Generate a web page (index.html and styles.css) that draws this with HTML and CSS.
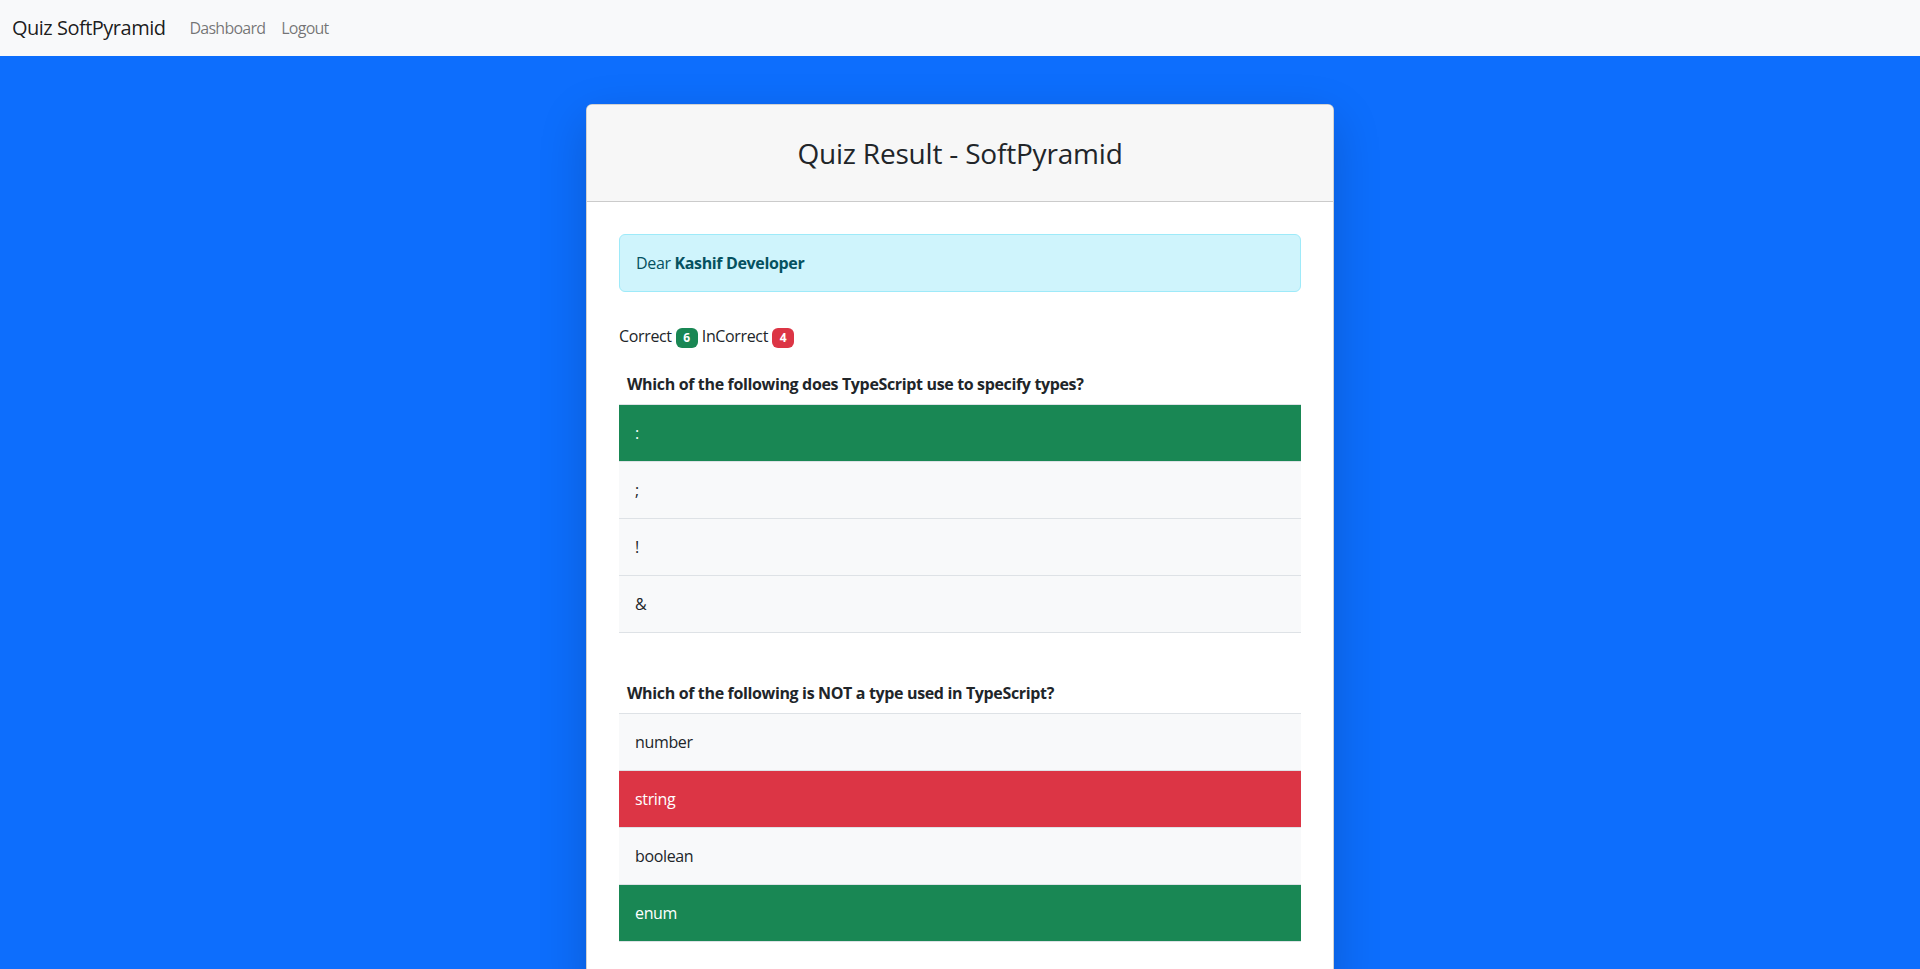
FILE: index.html
```html
<!DOCTYPE html>
<html lang="en">
<head>
<meta charset="utf-8">
<title>Quiz Result - SoftPyramid</title>
<link rel="stylesheet" href="styles.css">
</head>
<body>
<nav class="navbar">
  <a class="brand" href="#">Quiz SoftPyramid</a>
  <ul class="nav">
    <li><a class="nav-link" href="#">Dashboard</a></li>
    <li><a class="nav-link" href="#">Logout</a></li>
  </ul>
</nav>
<main class="page">
  <section class="card">
    <header class="card-header">
      <h3 class="card-title">Quiz Result - SoftPyramid</h3>
    </header>
    <div class="card-body">
      <div class="alert">Dear <strong>Kashif Developer</strong></div>
      <p class="score">Correct <span class="badge badge-success">6</span> InCorrect <span class="badge badge-danger">4</span></p>

      <table class="qtable">
        <thead><tr><th>Which of the following does TypeScript use to specify types?</th></tr></thead>
        <tbody>
          <tr class="opt correct"><td>:</td></tr>
          <tr class="opt"><td>;</td></tr>
          <tr class="opt"><td>!</td></tr>
          <tr class="opt"><td>&amp;</td></tr>
        </tbody>
      </table>
      <br>
      <table class="qtable">
        <thead><tr><th>Which of the following is NOT a type used in TypeScript?</th></tr></thead>
        <tbody>
          <tr class="opt"><td>number</td></tr>
          <tr class="opt wrong"><td>string</td></tr>
          <tr class="opt"><td>boolean</td></tr>
          <tr class="opt correct"><td>enum</td></tr>
        </tbody>
      </table>
    </div>
  </section>
</main>
</body>
</html>
```
FILE: styles.css
```css
* { box-sizing: border-box; }
html, body { margin: 0; padding: 0; }
body {
  font-family: "Segoe UI", "Open Sans", "Noto Sans", "Liberation Sans", sans-serif;
  font-size: 16px;
  line-height: 1.5;
  letter-spacing: -0.35px;
  color: #212529;
  background: #0d6efd;
}
a { text-decoration: none; }

.navbar {
  display: flex;
  align-items: center;
  height: 56px;
  padding: 8px 12px;
  background: #f8f9fa;
}
.brand {
  font-size: 20px;
  line-height: 30px;
  padding: 5px 0;
  margin-right: 16px;
  letter-spacing: -0.5px;
  color: rgba(0,0,0,.9);
}
.nav {
  display: flex;
  list-style: none;
  margin: 0;
  padding: 0;
}
.nav-link {
  display: block;
  padding: 8px;
  letter-spacing: -0.75px;
  color: rgba(0,0,0,.55);
}

.page {
  padding: 48px 0 48px;
  display: flex;
  justify-content: center;
}
.card {
  width: 748px;
  background: #fff;
  border: 1px solid rgba(0,0,0,.175);
  border-radius: 6px;
  box-shadow: 0 16px 48px rgba(0,0,0,.175);
  overflow: hidden;
}
.card-header {
  background: #f7f7f7;
  border-bottom: 1px solid rgba(0,0,0,.175);
  padding: 31px 32px;
  text-align: center;
}
.card-title {
  margin: 0;
  font-size: 28px;
  line-height: 34px;
  font-weight: 500;
  letter-spacing: -0.2px;
}
.card-body { padding: 32px; }

.alert {
  padding: 16px;
  background: #cff4fc;
  border: 1px solid #9eeaf9;
  border-radius: 6px;
  color: #055160;
  margin-bottom: 16px;
}
.alert strong { font-weight: 700; color: #055160; }

.score { margin: 32px 0 16px; }
.badge {
  display: inline-block;
  padding: 4.2px 7.8px;
  font-size: 12px;
  font-weight: 700;
  line-height: 1;
  letter-spacing: 0;
  color: #fff;
  border-radius: 6px;
  vertical-align: baseline;
}
.badge-success { background: #198754; }
.badge-danger { background: #dc3545; }

.qtable {
  width: 100%;
  border-collapse: collapse;
  margin-bottom: 16px;
}
.qtable th {
  text-align: left;
  font-weight: 700;
  padding: 8px;
  border-bottom: 1px solid #dee2e6;
}
.qtable td {
  padding: 16px;
  border-bottom: 1px solid #dee2e6;
}
.opt td { background: #f8f9fa; color: #212529; }
.opt.correct td { background: #198754; color: #fff; }
.opt.wrong td { background: #dc3545; color: #fff; }
```
